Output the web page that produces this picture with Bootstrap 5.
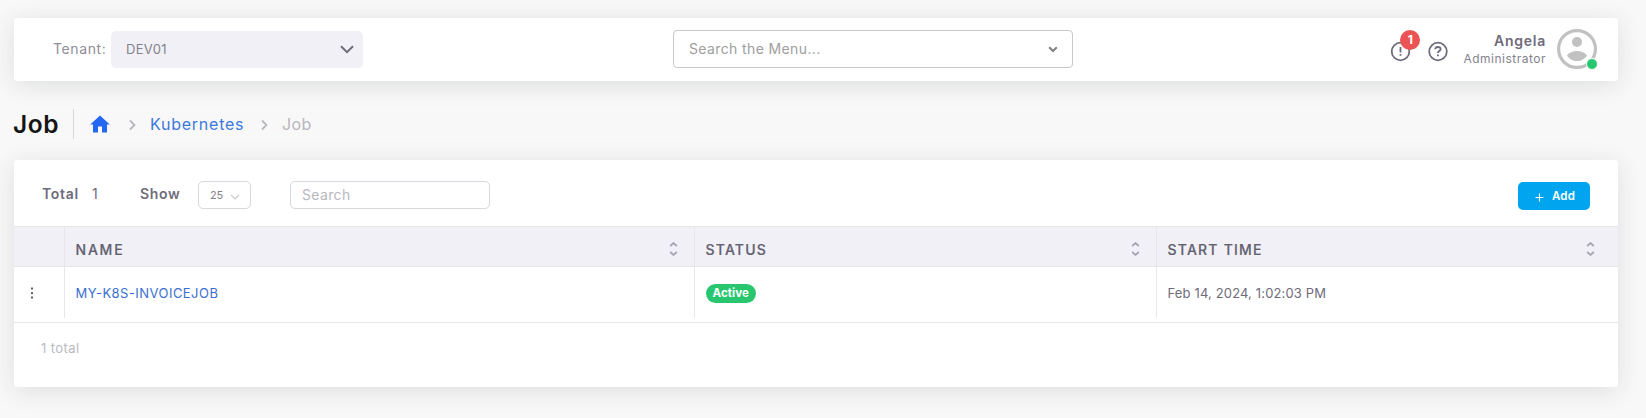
<!DOCTYPE html>
<html lang="en">
<head>
<meta charset="utf-8">
<meta name="viewport" content="width=device-width, initial-scale=1">
<title>Job</title>
<link href="https://cdn.jsdelivr.net/npm/bootstrap@5.3.0/dist/css/bootstrap.min.css" rel="stylesheet">
<style>
body{font-family:Inter,"Open Sans",sans-serif;font-size:14px;line-height:20px;background:#f8f8f8;color:#6e6b7b;padding:18px 28px 31px 14px;overflow:hidden}
svg{display:block;flex:none}
.panel{background:#fff;border-radius:3px;box-shadow:0 4px 24px rgba(34,41,47,.12)}
.topbar{height:63px;padding-right:21px;padding-bottom:1px}
.tenant-label{width:58px;margin-left:39px;letter-spacing:.6px;color:#8f8d98}
.tenant-select{width:252px;height:37px;background:#f1f0f6;border-radius:5px;padding:0 9px 0 15px;font-size:13px;letter-spacing:.25px;color:#84828d}
.menu-search{width:400px;height:38px;border:1px solid #c8c8c8;border-radius:4px;margin-left:310px;padding:0 14px 0 15px;letter-spacing:.38px;color:#9e9e9e}
.alert-icon{margin-top:4px}
.count-dot{position:absolute;left:10px;top:-11px;width:20px;height:20px;border-radius:50%;background:#ea5455;color:#fff;font-size:12px;font-weight:700;line-height:19px;text-align:center}
.user-name{font-weight:600;letter-spacing:.74px;line-height:17px}
.user-role{font-size:12px;letter-spacing:.5px;line-height:17px;color:#84828d;padding-top:1px}
.online-dot{position:absolute;left:29px;top:29px;width:12px;height:12px;border:1px solid #fff;border-radius:50%;background:#28c76f}
.crumbs{height:30px;margin:28px 0 21px;font-size:16px;color:#b8b6be}
.crumbs h1{font-size:24.5px;font-weight:600;letter-spacing:.6px;line-height:30px;width:60px;margin:0 0 0 -1px;color:#151515}
.crumbs a{color:#3d78dc;letter-spacing:.76px}
.crumbs .current{letter-spacing:.39px;margin-left:13px}
.rule{width:1px;height:30px;background:#d8d7dc}
.jobs{height:227px}
.toolbar{height:66px;padding:2px 28px 0}
.strong-label{font-weight:600;letter-spacing:.7px}
.page-size{width:53px;height:28px;border:1px solid #d8d6de;border-radius:5px;font-size:11px;letter-spacing:-.2px;padding:0 10px 0 11px;margin-top:1px;color:#84828d}
.table-search{width:200px;height:28px;border:1px solid #d8d6de;border-radius:5px;padding:0 11px;margin:1px 0 0 39px;letter-spacing:.34px;color:#b9b7c0}
.btn-add{width:72px;height:28px;background:#00a4ef;color:#fff;border:0;border-radius:5px;font-size:11.5px;font-weight:600;letter-spacing:.1px;padding:2px 0 0 2px}
.grid-line{display:grid;grid-template-columns:51px 630px 462px 1fr}
.grid-line>div{border-right:1px solid #e8e6ed;padding-left:10.5px}
.grid-line>div:last-child{border-right:0}
.head-line{height:41px;background:#f1f0f6;border-top:1px solid #e6e5ea;border-bottom:1px solid #e6e5ea;font-weight:500;-webkit-text-stroke:.2px #6e6b7b;letter-spacing:1.22px;color:#625f6e}
.head-line>div{display:flex;align-items:center;justify-content:space-between;padding-top:7px;padding-right:16px}
.head-line>div:nth-child(2){letter-spacing:1.8px}
.head-line svg{margin-top:-3px}
.data-line{height:56px;border-bottom:1px solid #e6e6e8;padding-bottom:4px;font-size:13px}
.data-line>div{display:flex;align-items:center}
.data-line a{color:#3a6fd0;letter-spacing:.46px}
.status-pill{height:19px;border-radius:10px;background:#28c76f;color:#fff;font-size:11.5px;font-weight:700;letter-spacing:.1px;line-height:19px;padding:0 7px;margin-top:2px}
.foot{padding:15px 27px;font-size:13px;letter-spacing:.42px;color:#b9b9c0}
</style>
</head>
<body>
<header class="panel topbar d-flex align-items-center">
  <span class="tenant-label">Tenant:</span>
  <div class="tenant-select d-flex align-items-center justify-content-between">DEV01
    <svg width="14" height="9" viewBox="0 0 14 9" fill="none" stroke="#6e6b7b" stroke-width="2"><path d="M1 1.2 7 7.2 13 1.2"/></svg>
  </div>
  <div class="menu-search d-flex align-items-center justify-content-between">Search the Menu...
    <svg width="10" height="7" viewBox="0 0 10 7" fill="none" stroke="#808080" stroke-width="2"><path d="M1.2 1.2 5 5l3.8-3.8"/></svg>
  </div>
  <div class="d-flex align-items-center ms-auto">
    <div class="alert-icon position-relative me-3">
      <svg width="21" height="21" viewBox="0 0 21 21" fill="none" stroke="#6e6b7b" stroke-width="1.8"><circle cx="10.5" cy="10.5" r="8.8"/><path d="M10.5 6v5.4M10.5 13v1.8"/></svg>
      <span class="count-dot">1</span>
    </div>
    <svg class="alert-icon" width="22" height="21" viewBox="0 0 22 21" fill="none" stroke="#6e6b7b" stroke-width="1.8"><circle cx="11" cy="10.5" r="8.8"/><path d="M8.3 8.3C8.4 6.7 9.5 6 10.9 6c1.5 0 2.7.8 2.7 2.2 0 1.7-2.7 2-2.7 3.8M10.9 13.4v1.8"/></svg>
    <div class="text-end" style="margin-left:14px">
      <div class="user-name">Angela</div>
      <div class="user-role">Administrator</div>
    </div>
    <div class="position-relative" style="margin-left:11px">
      <svg width="40" height="40" viewBox="0 0 40 40" fill="#c1c1c1"><circle cx="20" cy="20" r="18.4" fill="none" stroke="#c1c1c1" stroke-width="3.2"/><circle cx="20" cy="13" r="5"/><path d="M10 26.5C12 23.5 16 22 20 22s8 1.5 10 4.5C28 30 24 32 20 32s-8-2-10-5.5z"/></svg>
      <span class="online-dot"></span>
    </div>
  </div>
</header>

<nav class="crumbs d-flex align-items-center">
  <h1>Job</h1>
  <span class="rule"></span>
  <svg style="margin-left:16px" width="20" height="18" viewBox="0 0 20 18" fill="#2468f2"><path d="M10 .5 19.8 9.5H17V17.5h-5V11.5H8v6H3V9.5H.2z"/></svg>
  <svg style="margin:2px 0 0 18px" width="9" height="12" viewBox="0 0 9 12" fill="none" stroke="#b9b7be" stroke-width="1.8"><path d="m2 1.5 4.5 4.5L2 10.5"/></svg>
  <a class="text-decoration-none" style="margin-left:13px;width:110px" href="#">Kubernetes</a>
  <svg style="margin-top:2px" width="9" height="12" viewBox="0 0 9 12" fill="none" stroke="#b9b7be" stroke-width="1.8"><path d="m2 1.5 4.5 4.5L2 10.5"/></svg>
  <span class="current">Job</span>
</nav>

<main class="panel jobs">
  <div class="toolbar d-flex align-items-center">
    <span class="strong-label" style="width:50px">Total</span>
    <span style="width:48px">1</span>
    <span class="strong-label" style="width:58px">Show</span>
    <div class="page-size d-flex align-items-center justify-content-between">25
      <svg class="mt-1" width="10" height="6" viewBox="0 0 10 6" fill="none" stroke="#c8c7cc" stroke-width="1.2"><path d="m1 .8 4 4 4-4"/></svg>
    </div>
    <div class="table-search d-flex align-items-center">Search</div>
    <button class="btn btn-add ms-auto mt-1 d-flex align-items-center justify-content-center gap-2">
      <svg width="9" height="9" viewBox="0 0 9 9" stroke="#fff" stroke-width="1.1"><path d="M4.5 .5v8M.5 4.5h8"/></svg>Add
    </button>
  </div>
  <div class="grid-line head-line">
    <div></div>
    <div>NAME<svg width="9" height="14" viewBox="0 0 9 14" fill="none" stroke="#a6a4b0" stroke-width="1.7"><path d="m1.2 4 3.3-3 3.3 3M1.2 10l3.3 3 3.3-3"/></svg></div>
    <div>STATUS<svg width="9" height="14" viewBox="0 0 9 14" fill="none" stroke="#a6a4b0" stroke-width="1.7"><path d="m1.2 4 3.3-3 3.3 3M1.2 10l3.3 3 3.3-3"/></svg></div>
    <div style="padding-right:23px">START TIME<svg width="9" height="14" viewBox="0 0 9 14" fill="none" stroke="#a6a4b0" stroke-width="1.7"><path d="m1.2 4 3.3-3 3.3 3M1.2 10l3.3 3 3.3-3"/></svg></div>
  </div>
  <div class="grid-line data-line">
    <div class="ps-3"><svg width="4" height="12" viewBox="0 0 4 12" fill="#625f6e"><path d="M1 .5h2v2H1zM1 5h2v2H1zM1 9.5h2v2H1z"/></svg></div>
    <div><a class="text-decoration-none" href="#">MY-K8S-INVOICEJOB</a></div>
    <div><span class="status-pill">Active</span></div>
    <div style="letter-spacing:.15px">Feb 14, 2024, 1:02:03 PM</div>
  </div>
  <div class="foot">1 total</div>
</main>
<script src="https://cdn.jsdelivr.net/npm/bootstrap@5.3.0/dist/js/bootstrap.bundle.min.js"></script>
</body>
</html>
